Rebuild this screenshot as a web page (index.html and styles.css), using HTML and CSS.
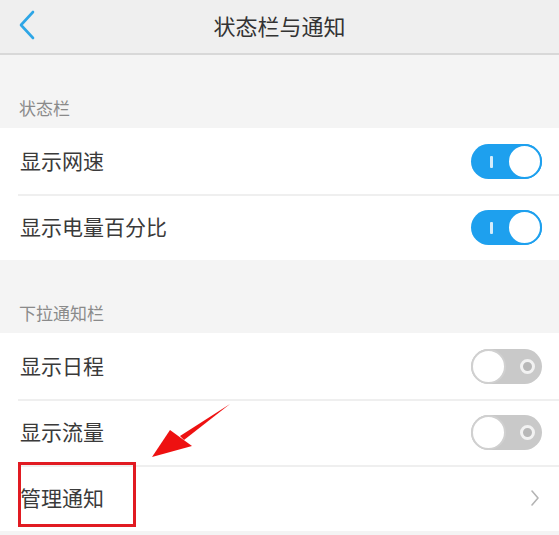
FILE: index.html
```html
<!DOCTYPE html>
<html lang="zh">
<head>
<meta charset="utf-8">
<link rel="stylesheet" href="styles.css">
</head>
<body>
<div class="page">
  <header class="topbar">
    <svg class="back" width="18" height="30" viewBox="0 0 18 30"><path d="M15 2 L3 15 L15 28" fill="none" stroke="#2ea6e6" stroke-width="2.6" stroke-linecap="round" stroke-linejoin="round"/></svg>
    <h1 class="title">状态栏与通知</h1>
  </header>
  <div class="section-label">状态栏</div>
  <div class="group">
    <div class="row"><span class="row-text">显示网速</span><span class="switch on"><span class="mark"></span><span class="knob"></span></span></div>
    <div class="row"><span class="row-text">显示电量百分比</span><span class="switch on"><span class="mark"></span><span class="knob"></span></span></div>
  </div>
  <div class="section-label">下拉通知栏</div>
  <div class="group">
    <div class="row"><span class="row-text">显示日程</span><span class="switch off"><span class="knob"></span><span class="ring"></span></span></div>
    <div class="row"><span class="row-text">显示流量</span><span class="switch off"><span class="knob"></span><span class="ring"></span></span></div>
    <div class="row"><span class="row-text">管理通知</span>
      <svg class="chev" width="10" height="18" viewBox="0 0 10 18"><path d="M2 2 L8 9 L2 16" fill="none" stroke="#b4b4b4" stroke-width="1.6" stroke-linecap="round" stroke-linejoin="round"/></svg>
    </div>
  </div>
  <div class="highlight"></div>
  <svg class="arrow" width="90" height="60" viewBox="0 0 90 60">
    <path d="M80 2 L30 34 L34 38 Z" fill="#ee1111"/>
    <path d="M2 55 L20 28 L42 44 Z" fill="#ee1111"/>
  </svg>
</div>
</body>
</html>
```
FILE: styles.css
```css
* { box-sizing: border-box; margin: 0; padding: 0; }
html, body { width: 559px; height: 535px; overflow: hidden; }
body { background: #f4f4f4; font-family: "Noto Sans CJK SC", "Noto Sans", sans-serif; }
.page { position: relative; width: 559px; height: 535px; }
.topbar {
  height: 55px; background: #efefef; border-bottom: 2px solid #d8d8d8;
  display: flex; align-items: center; justify-content: center; position: relative;
}
.back { position: absolute; left: 18px; top: 10px; }
.title { font-size: 22px; font-weight: 400; color: #333; margin-top: -4px; }
.section-label {
  height: 73px; display: flex; align-items: flex-end; padding: 0 0 8px 19px;
  font-size: 17px; color: #8a8a8a;
}
.group { background: #fff; }
.row {
  height: 66px; display: flex; align-items: center; justify-content: space-between;
  padding: 0 17px 0 20px; position: relative;
}
.row + .row::before {
  content: ""; position: absolute; left: 18px; right: 0; top: 0; height: 2px; background: #efefef;
}
.row-text { font-size: 21px; color: #3a3a3a; margin-top: -2px; }
.switch {
  width: 71px; height: 35px; border-radius: 18px; position: relative; display: block;
}
.switch.on { background: #1ea0ee; }
.switch.off { background: #c9c9c9; }
.knob {
  position: absolute; top: 0; width: 35px; height: 35px; border-radius: 50%; background: #fff;
}
.on .knob { right: 0; border: 2px solid #1ea0ee; }
.off .knob { left: 0; border: 2px solid #d0d0d0; }
.mark { position: absolute; left: 19px; top: 12px; width: 3px; height: 12px; background: #d4ecfb; border-radius: 1px; }
.ring { position: absolute; left: 49px; top: 10px; width: 15px; height: 15px; border-radius: 50%; border: 3px solid #f2f2f2; background: #b8b8b8; }
.chev { margin-right: 2px; }
.highlight {
  position: absolute; left: 18px; top: 462px; width: 118px; height: 65px; border: 3px solid #e11b22;
}
.arrow { position: absolute; left: 150px; top: 402px; }
```
